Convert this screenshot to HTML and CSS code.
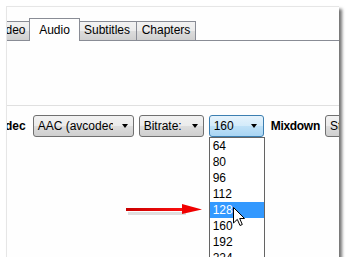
FILE: index.html
```html
<!DOCTYPE html>
<html>
<head>
    <title>Audio settings</title>
    <link rel="stylesheet" href="styles.css">
</head>
<body>
    <div class="frame">
        <div class="tabs">
            <div class="tab tab-video">Video</div>
            <div class="tab tab-audio selected">Audio</div>
            <div class="tab tab-subs">Subtitles</div>
            <div class="tab tab-chapters">Chapters</div>
        </div>
        <div class="pane"></div>
        <div class="row">
            <span class="label label-codec">Codec</span>
            <div class="combo combo-codec"><span class="combo-text">AAC (avcodec)</span><span class="caret"></span></div>
            <div class="combo combo-rate"><span class="combo-text">Bitrate:</span><span class="caret"></span></div>
            <div class="combo combo-bitrate hot">
                <span class="combo-text">160</span><span class="caret"></span>
                <ul class="dropdown">
                    <li>64</li>
                    <li>80</li>
                    <li>96</li>
                    <li>112</li>
                    <li class="active">128</li>
                    <li>160</li>
                    <li>192</li>
                    <li>224</li>
                </ul>
            </div>
            <span class="label label-mix">Mixdown</span>
            <div class="combo combo-mix"><span class="combo-text">Stereo</span></div>
        </div>

        <svg class="pointer-arrow" width="80" height="16" viewBox="0 0 80 16">
            <defs>
                <linearGradient id="redLine" x1="0" x2="1" y1="0" y2="0">
                    <stop offset="0" stop-color="#c80000"/>
                    <stop offset="1" stop-color="#ff1010"/>
                </linearGradient>
            </defs>
            <rect x="2" y="9" width="58" height="3" fill="#000" opacity="0.12"/>
            <rect x="0" y="5" width="60" height="3" fill="url(#redLine)"/>
            <polygon points="56,1 76,6.5 56,11" fill="#f00000"/>
        </svg>

        <svg class="cursor" width="13" height="20" viewBox="0 0 13 20">
            <polygon points="0.5,0.5 0.5,16 4.3,12.4 7,18.5 9.3,17.5 6.7,11.5 11.5,11.5" fill="#fff" stroke="#000" stroke-width="1" stroke-linejoin="miter"/>
        </svg>
    </div>
</body>
</html>
```

FILE: styles.css
```css
body {
    margin: 0;
    background: #ffffff;
    font-family: "Liberation Sans", Arial, sans-serif;
    font-size: 12px;
    color: #000;
}

.frame {
    position: relative;
    margin: 6px 0 0 6px;
    width: 332px;
    height: 250px;
    border-top: 1px solid #e6e6e6;
    border-left: 1px solid #e6e6e6;
    background: #fefefe;
    overflow: hidden;
    box-shadow: 3px 3px 3px rgba(0, 0, 0, 0.55);
}

.tabs {
    display: flex;
    align-items: flex-end;
    height: 33px;
    border-bottom: 1px solid #898c95;
    margin-left: -15px;
}

.tab {
    box-sizing: border-box;
    height: 19px;
    line-height: 16px;
    padding-bottom: 2px;
    text-align: center;
    border: 1px solid #898c95;
    border-bottom: none;
    background: linear-gradient(#f2f2f2, #ebebeb 50%, #dddddd 50%, #cfcfcf);
    margin-left: -1px;
}

.tab.selected {
    position: relative;
    z-index: 1;
    height: 23px;
    padding-top: 3px;
    padding-bottom: 3px;
    margin-bottom: -1px;
    background: #fefefe;
}

.tab-video {
    width: 38px;
    margin-left: 0;
    text-align: left;
    padding-left: 2px;
}

.tab-audio {
    width: 51px;
}

.tab-subs {
    width: 58px;
    padding-right: 2px;
}

.tab-chapters {
    width: 60px;
}

.pane {
    height: 64px;
    border-bottom: 1px solid #e0e0e0;
}

.row {
    display: flex;
    align-items: center;
    height: 22px;
    margin-top: 9px;
}

.label {
    font-weight: bold;
    white-space: nowrap;
}

.label-codec {
    margin-left: -18px;
    margin-right: 7px;
}

.label-mix {
    margin-left: 7px;
    margin-right: 5px;
    letter-spacing: -0.3px;
}

.combo {
    position: relative;
    box-sizing: border-box;
    height: 22px;
    border: 1px solid #707070;
    border-radius: 3px;
    background: linear-gradient(#f2f2f2, #ebebeb 50%, #dddddd 50%, #cfcfcf);
    display: flex;
    align-items: center;
    flex-shrink: 0;
}

.combo-text {
    display: block;
    overflow: hidden;
    white-space: nowrap;
    padding-left: 4px;
    line-height: 16px;
}

.caret {
    position: absolute;
    right: 5px;
    top: 8px;
    width: 0;
    height: 0;
    border-left: 3.5px solid transparent;
    border-right: 3.5px solid transparent;
    border-top: 4px solid #000;
}

.combo-codec {
    width: 101px;
    margin-right: 5px;
}

.combo-codec .combo-text {
    width: 75px;
}

.combo-rate {
    width: 65px;
    margin-right: 5px;
}

.combo-bitrate {
    width: 55px;
}

.combo-bitrate .caret {
    right: 6px;
}

.combo.hot {
    border-color: #3c7fb1;
    background: linear-gradient(#e6f3fc, #d3ebfa 50%, #bfe1f7 50%, #a9d5f3);
}

.combo-mix {
    width: 60px;
}

.dropdown {
    position: absolute;
    left: -1px;
    top: 21px;
    width: 56px;
    box-sizing: border-box;
    margin: 0;
    padding: 0;
    list-style: none;
    background: #fff;
    border: 1px solid #646464;
    z-index: 2;
}

.dropdown li {
    height: 16px;
    line-height: 16px;
    padding-left: 3px;
}

.dropdown li.active {
    background: #3399ff;
    color: #fff;
}

.pointer-arrow {
    position: absolute;
    left: 119px;
    top: 196px;
    z-index: 3;
}

.cursor {
    position: absolute;
    left: 226px;
    top: 200px;
    z-index: 3;
}
```
